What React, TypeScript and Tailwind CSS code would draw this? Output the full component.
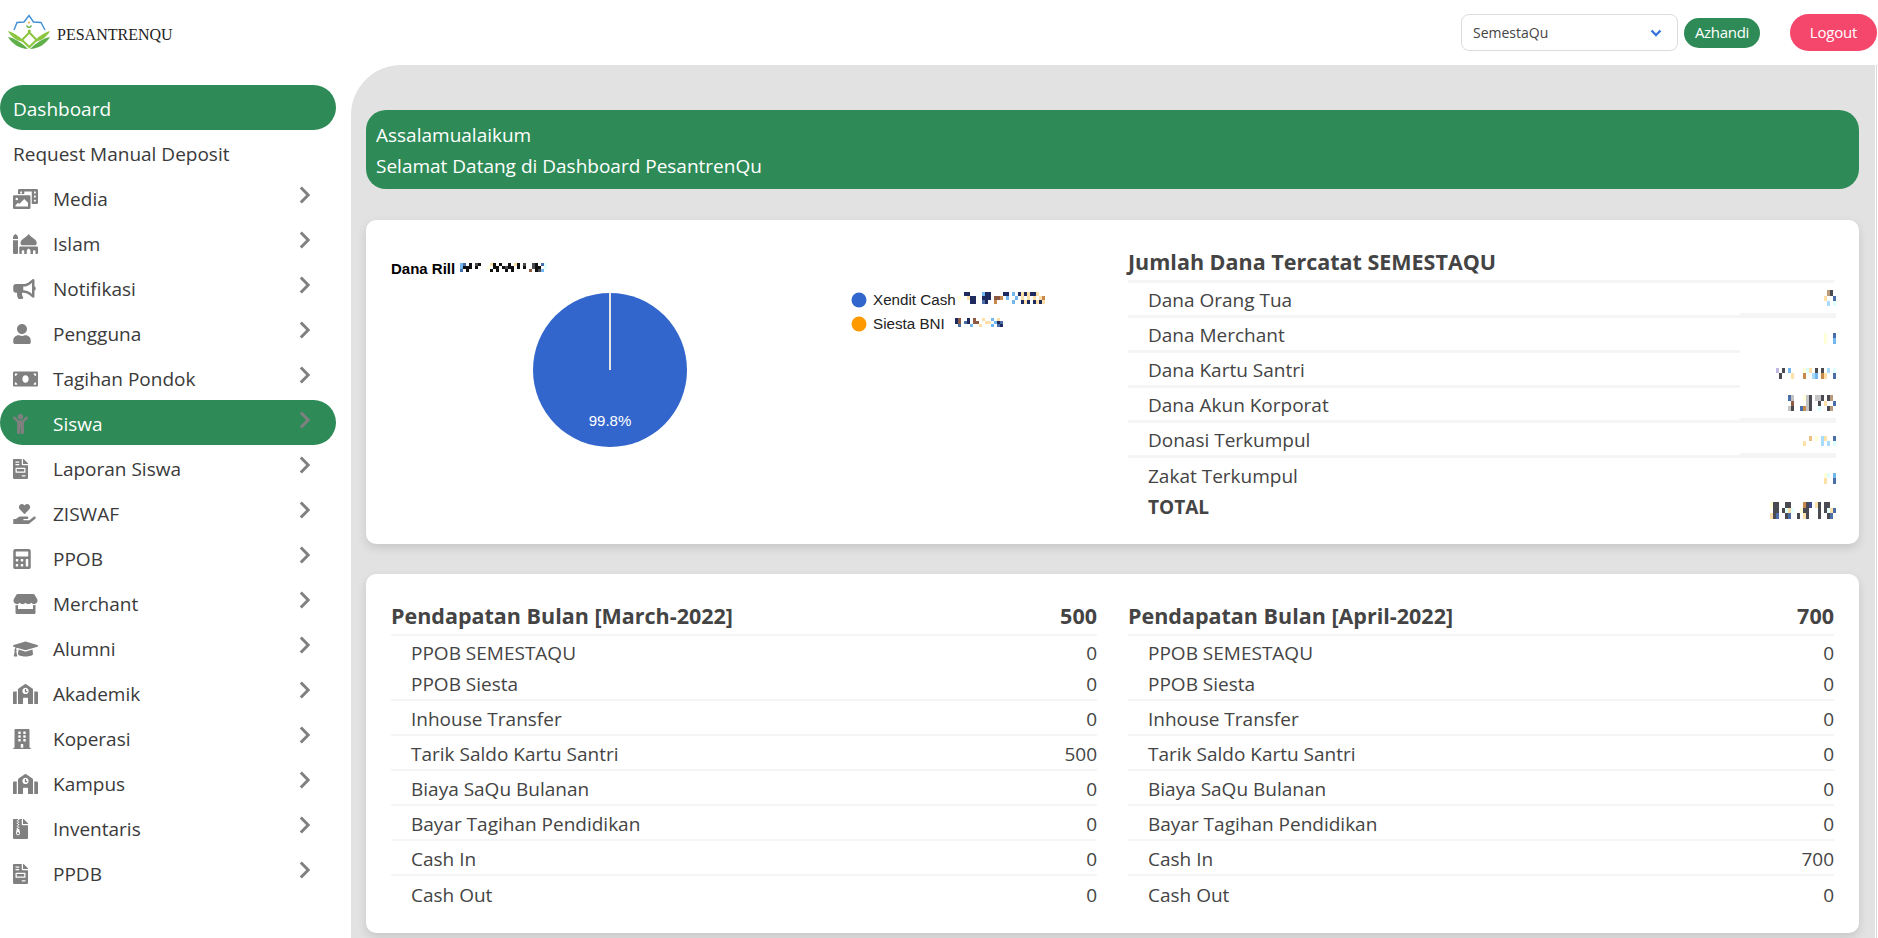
import type { ReactNode } from 'react';
import {
  FaPhotoVideo,
  FaMosque,
  FaBullhorn,
  FaUser,
  FaMoneyBill,
  FaChild,
  FaFileInvoice,
  FaHandHoldingHeart,
  FaCalculator,
  FaStore,
  FaGraduationCap,
  FaSchool,
  FaBuilding,
  FaFileArchive,
} from 'react-icons/fa';

const palette: Record<string, string> = {
  d: '#4a4a52',
  D: '#1f2a5e',
  n: '#4a6fa8',
  N: '#3f4a8c',
  l: '#a8dcff',
  m: '#72b8ee',
  c: '#e0ffff',
  y: '#ffe0a8',
  Y: '#f0c080',
  p: '#ffffd8',
  o: '#c88a4a',
  t: '#b8997a',
  g: '#c4c4c4',
  r: '#8f5a44',
  v: '#c0b8e0',
  k: '#111111',
};

// the amounts are blurred out in the picture, so they stay as mosaics
const Mosaic = ({ rows, cw = 3, ch = 5.5 }: { rows: string[]; cw?: number; ch?: number }) => (
  <svg width={rows[0].length * cw} height={rows.length * ch} shapeRendering="crispEdges" className="block shrink-0">
    {rows.map((row, y) =>
      row.split('').map((c, x) =>
        palette[c] ? <rect key={`${x}-${y}`} x={x * cw} y={y * ch} width={cw} height={ch} fill={palette[c]} /> : null,
      ),
    )}
  </svg>
);

const Chevron = () => (
  <svg width="11" height="18" viewBox="0 0 11 18" className="block">
    <path d="M1.8 1.5 9.2 9 1.8 16.5" fill="none" stroke="#808080" strokeWidth="3" />
  </svg>
);

const Logo = () => (
  <svg width="52" height="50" viewBox="0 0 52 50" className="block shrink-0 self-start">
    <path d="M14 30 17 22.5 24 22 29 15.5 33.5 22 41 22.5 45 30" fill="none" stroke="#3f8fd6" strokeWidth="1.4" />
    <circle cx="29" cy="22.5" r="1" fill="#e8a13a" />
    <path d="M26.5 25.5c1 2.4 4 2.4 5 0" fill="none" stroke="#5aa83a" strokeWidth="1.2" />
    <circle cx="29.3" cy="31" r="1.6" fill="#8cc63f" />
    <path d="M29.3 32.5 22 40l7.3 7 7.3-7z" fill="none" stroke="#8cc63f" strokeWidth="2" />
    <path d="M8 31c6 2 13 6 16 11-7-1-13-5-16-11z" fill="#8cc63f" />
    <path d="M50 31c-6 2-13 6-16 11 7-1 13-5 16-11z" fill="#8cc63f" />
    <path d="M8 37c6 1 13 5 20 12-8 0-16-5-20-12z" fill="#5fb04a" />
    <path d="M50 37c-6 1-13 5-20 12 8 0 16-5 20-12z" fill="#5fb04a" />
  </svg>
);

const menu: { label: string; icon?: ReactNode; active?: boolean; arrow?: boolean }[] = [
  { label: 'Dashboard', active: true },
  { label: 'Request Manual Deposit' },
  { label: 'Media', icon: <FaPhotoVideo className="h-[20px] w-[25px]" />, arrow: true },
  { label: 'Islam', icon: <FaMosque className="h-[20px] w-[25px]" />, arrow: true },
  { label: 'Notifikasi', icon: <FaBullhorn className="h-[20px] w-[23px]" />, arrow: true },
  { label: 'Pengguna', icon: <FaUser className="h-[20px] w-[18px]" />, arrow: true },
  { label: 'Tagihan Pondok', icon: <FaMoneyBill className="h-[20px] w-[25px]" />, arrow: true },
  { label: 'Siswa', icon: <FaChild className="h-[20px] w-[15px]" />, active: true, arrow: true },
  { label: 'Laporan Siswa', icon: <FaFileInvoice className="h-[20px] w-[15px]" />, arrow: true },
  { label: 'ZISWAF', icon: <FaHandHoldingHeart className="h-[20px] w-[23px]" />, arrow: true },
  { label: 'PPOB', icon: <FaCalculator className="h-[20px] w-[18px]" />, arrow: true },
  { label: 'Merchant', icon: <FaStore className="h-[20px] w-[25px]" />, arrow: true },
  { label: 'Alumni', icon: <FaGraduationCap className="h-[20px] w-[25px]" />, arrow: true },
  { label: 'Akademik', icon: <FaSchool className="h-[20px] w-[25px]" />, arrow: true },
  { label: 'Koperasi', icon: <FaBuilding className="h-[20px] w-[18px]" />, arrow: true },
  { label: 'Kampus', icon: <FaSchool className="h-[20px] w-[25px]" />, arrow: true },
  { label: 'Inventaris', icon: <FaFileArchive className="h-[20px] w-[15px]" />, arrow: true },
  { label: 'PPDB', icon: <FaFileInvoice className="h-[20px] w-[15px]" />, arrow: true },
];

const Sidebar = () => (
  <aside className="w-[351px] shrink-0 pt-[20px]">
    {menu.map((item) => (
      <div
        key={item.label}
        className={`relative flex h-[45px] w-[336px] items-center rounded-full pl-[13px] ${
          item.active ? 'bg-[#2e8b57] text-white' : 'text-[#3a3a3a]'
        }`}
      >
        {item.icon && <span className="flex w-[40px] shrink-0 items-center pt-[3px] text-[#808080]">{item.icon}</span>}
        <span className="pt-[3px]">{item.label}</span>
        {item.arrow && (
          <span className="absolute left-[299px] top-[11px]">
            <Chevron />
          </span>
        )}
      </div>
    ))}
  </aside>
);

const DanaChart = () => (
  <svg width="706" height="260" viewBox="391 240 706 260" className="block" fontFamily="'Liberation Sans', Arial, sans-serif">
    <text x="391" y="274" fontSize="15" fontWeight="700" fill="#000">
      Dana Rill
    </text>
    <foreignObject x="460" y="263" width="90" height="10">
      <Mosaic cw={3} ch={3} rows={['mn.k.dk...yk.k..k.yk.d..dk.nc', 'mkkk.k...p.kk.kdkk.k.k..dkk.c', 'n.k.......k.k..k.k.....r.kdm..']} />
    </foreignObject>
    <circle cx="610" cy="370" r="77" fill="#3366cc" />
    <path d="M610 293V370" stroke="#e6e6e6" strokeWidth="2" />
    <text x="610" y="426" fontSize="15" fill="#fff" textAnchor="middle">
      99.8%
    </text>
    <circle cx="859" cy="300" r="7.5" fill="#3366cc" />
    <text x="873" y="305" fontSize="15.2" fill="#222">
      Xendit Cash
    </text>
    <foreignObject x="958" y="292" width="92" height="13">
      <Mosaic cw={3} ch={4} rows={['..DD....mDD....DD.m.DyDyDDy..', 'p..yDD..DDD.rro.m..m.y.y.y.yo', '....DD..nD..o.....m..DyD.DyDy']} />
    </foreignObject>
    <circle cx="859" cy="324" r="7.5" fill="#ff9900" />
    <text x="873" y="329" fontSize="15.2" fill="#222">
      Siesta BNI
    </text>
    <foreignObject x="955" y="318" width="50" height="10">
      <Mosaic cw={3} ch={3} rows={['Dr..D.r..y..m.y.', 'Dr.nD.rr..yy.mDn', '.n...m..y...m.nD']} />
    </foreignObject>
  </svg>
);

const dana: { label: string; rows: string[]; thick?: boolean; line?: boolean }[] = [
  { label: 'Dana Orang Tua', rows: ['.td.', 'y..n', '.l.c'], line: true, thick: true },
  { label: 'Dana Merchant', rows: ['....', 'p..n', 'p..m'], line: true },
  { label: 'Dana Kartu Santri', rows: ['.'.repeat(20), 'v.d.m....pcy.d.d.l.c', '.d...y...o..lm.oy..n'], line: true },
  { label: 'Dana Akun Korporat', rows: ['ng...pgd.ggd.dt.', '.r....gd..d.y..n', 'gd..nogd..c..dt.'], line: true, thick: true },
  { label: 'Donasi Terkumpul', rows: ['.'.repeat(11), '..Y.p.ly..n', 'y.....l.l.c'], line: true, thick: true },
  { label: 'Zakat Terkumpul', rows: ['....', 'pc.m', 'y..n'] },
];

const Dana = () => (
  <div>
    <h2 className="flex h-[40px] items-center pt-[4px] text-[21.5px] font-bold">Jumlah Dana Tercatat SEMESTAQU</h2>
    <div className="h-[3px] bg-[#f5f5f5]" />
    {dana.map((row) => (
      <div key={row.label} className="grid h-[35px] grid-cols-[612px_94px]">
        <div className={`flex items-center pl-[20px] pt-[2px] ${row.line ? 'border-b-[3px] border-[#f5f5f5]' : ''}`}>{row.label}</div>
        <div className={`-mr-[2px] flex items-center justify-end ${row.thick ? 'border-b-[5px] border-[#f5f5f5]' : ''}`}>
          <Mosaic rows={row.rows} />
        </div>
      </div>
    ))}
    <div className="grid h-[24px] grid-cols-[612px_94px]">
      <div className="flex items-center pb-[3px] pl-[20px] font-bold">TOTAL</div>
      <div className="-mr-[2px] flex items-start justify-end pt-[9px]">
        <Mosaic rows={['pdd..dd....odN.yd.dd..', '.dd.dcyc..pdd...d.dcyn', 'ydn..dn..d.yd...d..dn.']} />
      </div>
    </div>
  </div>
);

const Pendapatan = ({ month, total, rows }: { month: string; total: string; rows: string[] }) => {
  const labels = [
    'PPOB SEMESTAQU',
    'PPOB Siesta',
    'Inhouse Transfer',
    'Tarik Saldo Kartu Santri',
    'Biaya SaQu Bulanan',
    'Bayar Tagihan Pendidikan',
    'Cash In',
    'Cash Out',
  ];
  return (
    <div>
      <div className="flex h-[42px] items-center justify-between border-b-2 border-[#f5f5f5] pt-[4px] text-[21.5px] font-bold">
        <span>Pendapatan Bulan [{month}]</span>
        <span>{total}</span>
      </div>
      {labels.map((label, i) => (
        <div
          key={label}
          className={`flex items-center justify-between pl-[20px] pt-[3px] ${i === 0 ? 'h-[31px]' : i === 1 ? 'h-[34px] border-b-2 border-[#f5f5f5]' : i === 7 ? 'h-[35px]' : 'h-[35px] border-b-2 border-[#f5f5f5]'}`}
        >
          <span>{label}</span>
          <span>{rows[i]}</span>
        </div>
      ))}
    </div>
  );
};

export default function App() {
  return (
    <div className="h-screen overflow-hidden bg-white text-[19px] text-[#444] font-['Open_Sans',sans-serif]">
      {/* Topbar */}
      <header className="flex h-[65px] items-center">
        <Logo />
        <span className="ml-[5px] mt-[4px] font-['Liberation_Serif',serif] text-[16px] font-medium text-[#222]">PESANTRENQU</span>
        <div className="ml-auto flex items-center">
          <div className="flex h-[37px] w-[217px] items-center justify-between rounded-lg border border-[#dcdcdc] pl-[11px] pr-[15px] text-[14px] text-[#444]">
            <span>SemestaQu</span>
            <svg width="12" height="8" viewBox="0 0 12 8">
              <path d="M1.5 1.5 6 6l4.5-4.5" fill="none" stroke="#3b73e0" strokeWidth="2.4" />
            </svg>
          </div>
          <div className="ml-[6px] flex h-[30px] w-[76px] items-center justify-center rounded-full bg-[#2e8b57] text-[15px] tracking-[-0.3px] text-white">
            Azhandi
          </div>
          <div className="ml-[30px] mr-[1px] flex h-[37px] w-[87px] items-center justify-center rounded-full bg-[#f5476b] text-[15px] tracking-[-0.2px] text-white">
            Logout
          </div>
        </div>
      </header>

      <div className="flex">
        <Sidebar />
        <main className="h-[873px] w-[1524px] shrink-0 rounded-tl-[50px] bg-[#e2e2e2] px-[15px] pt-[45px]">
          <div className="flex h-[79px] w-[1493px] flex-col justify-center rounded-[20px] bg-[#2e8b57] pl-[10px] pt-[2px] leading-[31px] text-white">
            <p>Assalamualaikum</p>
            <p>Selamat Datang di Dashboard PesantrenQu</p>
          </div>

          <section className="mt-[31px] grid h-[324px] w-[1493px] grid-cols-[706px_706px] gap-x-[31px] rounded-[10px] bg-white px-[25px] pt-[20px] shadow-[0_4px_10px_rgba(0,0,0,0.12)]">
            <DanaChart />
            <Dana />
          </section>

          <section className="mt-[30px] grid h-[359px] w-[1493px] grid-cols-[706px_706px] gap-x-[31px] rounded-[10px] bg-white px-[25px] pt-[20px] shadow-[0_4px_10px_rgba(0,0,0,0.12)]">
            <Pendapatan month="March-2022" total="500" rows={['0', '0', '0', '500', '0', '0', '0', '0']} />
            <Pendapatan month="April-2022" total="700" rows={['0', '0', '0', '0', '0', '0', '700', '0']} />
          </section>
        </main>
        {/* browser scrollbar sliver */}
        <div className="ml-[1px] h-[873px] w-[1px] bg-[#d8d8d8]" />
      </div>
    </div>
  );
}
